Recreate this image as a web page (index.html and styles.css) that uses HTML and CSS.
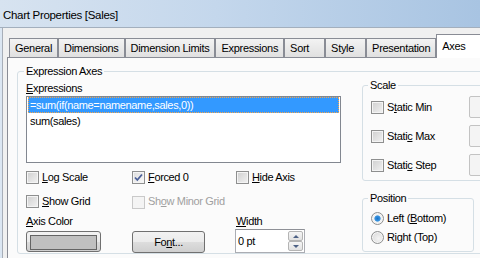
FILE: index.html
```html
<!DOCTYPE html>
<html lang="en">
<head>
    <meta charset="UTF-8">
    <title>Chart Properties [Sales]</title>
    <link rel="stylesheet" href="styles.css">
</head>
<body>
    <div class="window">
        <div class="titlebar">Chart Properties [Sales]</div>
        <div class="frame">
            <div class="tabs">
                <div class="tab">General</div>
                <div class="tab">Dimensions</div>
                <div class="tab">Dimension Limits</div>
                <div class="tab">Expressions</div>
                <div class="tab">Sort</div>
                <div class="tab">Style</div>
                <div class="tab">Presentation</div>
                <div class="tab active">Axes</div>
            </div>
            <div class="panel">
                <fieldset class="group axes-group">
                    <legend>Expression Axes</legend>
                    <div class="axes-layout">
                        <div class="left-col">
                            <div class="label"><u>E</u>xpressions</div>
                            <div class="listbox">
                                <div class="item selected">=sum(if(name=namename,sales,0))</div>
                                <div class="item">sum(sales)</div>
                            </div>
                            <div class="options">
                                <div class="check"><span class="box"></span><span><u>L</u>og Scale</span></div>
                                <div class="check checked"><span class="box"><svg width="11" height="11" viewBox="0 0 11 11"><path d="M2 5.5 L4.3 8 L9 2.5" fill="none" stroke="#4a5f98" stroke-width="1.8"/></svg></span><span><u>F</u>orced 0</span></div>
                                <div class="check"><span class="box"></span><span><u>H</u>ide Axis</span></div>
                                <div class="check"><span class="box"></span><span><u>S</u>how Grid</span></div>
                                <div class="check disabled"><span class="box"></span><span>Sh<u>o</u>w Minor Grid</span></div>
                            </div>
                            <div class="bottom-row">
                                <div class="label"><u>A</u>xis Color</div>
                                <div></div>
                                <div class="label"><u>W</u>idth</div>
                                <button class="btn color-btn"><span class="swatch"></span></button>
                                <button class="btn font-btn">Fo<u>n</u>t...</button>
                                <div class="spin">
                                    <span class="spin-value">0 pt</span>
                                    <span class="spin-buttons">
                                        <span class="spin-btn up"></span>
                                        <span class="spin-btn down"></span>
                                    </span>
                                </div>
                            </div>
                        </div>
                        <div class="right-col">
                            <fieldset class="group scale-group">
                                <legend>Scale</legend>
                                <div class="scale-row">
                                    <div class="check"><span class="box"></span><span>S<u>t</u>atic Min</span></div>
                                    <span class="edit"></span>
                                </div>
                                <div class="scale-row">
                                    <div class="check"><span class="box"></span><span>Stati<u>c</u> Max</span></div>
                                    <span class="edit"></span>
                                </div>
                                <div class="scale-row">
                                    <div class="check"><span class="box"></span><span>Stati<u>c</u> Step</span></div>
                                    <span class="edit"></span>
                                </div>
                            </fieldset>
                            <fieldset class="group position-group">
                                <legend>Position</legend>
                                <div class="radio selected"><span class="dot"></span><span>Left (<u>B</u>ottom)</span></div>
                                <div class="radio"><span class="dot"></span><span>Right (Top)</span></div>
                            </fieldset>
                        </div>
                    </div>
                </fieldset>
            </div>
        </div>
    </div>
</body>
</html>
```

FILE: styles.css
```css
body {
    margin: 0;
    font-family: "Liberation Sans", Arial, sans-serif;
    font-size: 11px;
    line-height: 13px;
    letter-spacing: -0.35px;
    color: #000;
    background: #f0f0f0;
}

.window {
    width: 480px;
    height: 258px;
    overflow: hidden;
    background: #dbe6f2;
}

.titlebar {
    height: 28px;
    box-sizing: border-box;
    padding: 9px 0 0 3px;
    font-size: 11.5px;
    letter-spacing: -0.3px;
    background: linear-gradient(to right, #d7e3f0 0%, #c4d7ec 45%, #a8c4e2 100%);
    border-bottom: 1px solid #a3afbd;
}

.frame {
    height: 230px;
    margin-left: 2px;
    padding-top: 6px;
    border-left: 1px solid #a7aeb8;
    background: #f0f0f0;
}

/* tab strip */
.tabs {
    display: flex;
    align-items: flex-end;
    margin-left: 6px;
}

.tab {
    flex-shrink: 0;
    min-width: 41px;
    height: 19px;
    box-sizing: border-box;
    padding: 3px 5px 0;
    border: 1px solid #898c95;
    border-bottom: none;
    background: linear-gradient(#f3f3f3, #e0e0e0);
    letter-spacing: -0.3px;
    white-space: nowrap;
}

.tab.active {
    min-width: 60px;
    height: 24px;
    padding: 5px 5px 0;
    margin-bottom: -1px;
    background: #fff;
    position: relative;
    z-index: 1;
}

.panel {
    height: 220px;
    margin-left: 4px;
    border-top: 1px solid #898c95;
    border-left: 1px solid #898c95;
    background: #fbfbfb;
}

/* group boxes */
.group {
    margin: 0;
    padding: 0;
    border: 1px solid #d5dfe5;
    border-radius: 3px;
    min-width: 0;
}

.group legend {
    padding: 0 2px;
    margin-left: -2px;
}

.axes-group {
    width: 600px;
    margin: 7px 0 0 9px;
    padding: 1px 0 0 8px;
}

.axes-layout {
    display: grid;
    grid-template-columns: 315px 140px;
    column-gap: 21px;
}

.left-col {
    padding-top: 3px;
}

.listbox {
    height: 67px;
    box-sizing: border-box;
    margin-top: 1px;
    padding: 0 1px;
    border: 1px solid #828790;
    background: #fff;
}

.item {
    height: 16px;
    line-height: 16px;
    padding-left: 2px;
    white-space: nowrap;
}

.item.selected {
    background: #3399ff;
    color: #fff;
    outline: 1px dotted #f7a64a;
    outline-offset: -1px;
}

/* check boxes */
.options {
    display: grid;
    grid-template-columns: 106px 104px auto;
    row-gap: 9px;
    margin-top: 7px;
}

.check,
.radio {
    display: flex;
    align-items: center;
    gap: 3px;
    height: 15px;
    white-space: nowrap;
}

.box {
    width: 13px;
    height: 13px;
    box-sizing: border-box;
    border: 1px solid #8e8f8f;
    background: linear-gradient(135deg, #cfcfcf 0%, #f2f2f2 100%);
    box-shadow: inset 0 0 0 1px #f4f4f4;
    display: flex;
    align-items: center;
    justify-content: center;
}

.check.checked .box {
    background: linear-gradient(135deg, #dcdcdc 0%, #fafafa 100%);
}

.check.disabled {
    color: #a0a0a0;
}

.check.disabled .box {
    border-color: #c9c9c9;
    background: #f4f4f4;
    box-shadow: none;
    margin-top: 2px;
}

/* bottom row */
.bottom-row {
    display: grid;
    grid-template-columns: 106px 104px auto;
    align-items: end;
    margin-top: 6px;
}

.btn {
    box-sizing: border-box;
    border: 1px solid #707070;
    border-radius: 3px;
    background: linear-gradient(#f2f2f2 0%, #ebebeb 50%, #dddddd 51%, #cfcfcf 100%);
    font: inherit;
    letter-spacing: inherit;
    padding: 0;
    margin-top: 3px;
}

.color-btn {
    width: 75px;
    height: 21px;
    padding: 3px;
    align-self: start;
}

.swatch {
    display: block;
    height: 13px;
    border: 1px solid #646464;
    background: #c0c0c0;
}

.font-btn {
    width: 73px;
    height: 22px;
    align-self: start;
}

.spin {
    width: 70px;
    height: 24px;
    box-sizing: border-box;
    margin-top: 1px;
    margin-left: -1px;
    border: 1px solid #abadb3;
    border-top-color: #8e9096;
    background: #fff;
    display: flex;
    align-items: center;
    justify-content: space-between;
    padding-left: 2px;
    align-self: start;
}

.spin-buttons {
    display: flex;
    flex-direction: column;
    align-self: stretch;
    width: 15px;
    padding: 1px;
}

.spin-btn {
    flex: 1;
    border: 1px solid #b4b4b4;
    border-radius: 2px;
    background: linear-gradient(#f6f6f6, #e2e2e2);
    position: relative;
}

.spin-btn::after {
    content: "";
    position: absolute;
    left: 4px;
    top: 3px;
    border-left: 3px solid transparent;
    border-right: 3px solid transparent;
}

.spin-btn.up::after {
    border-bottom: 3px solid #4d6185;
}

.spin-btn.down::after {
    border-top: 3px solid #4d6185;
}

/* right column */
.scale-group {
    padding: 4px 0 4px 8px;
}

.scale-group legend {
    margin-left: -3px;
}

.scale-row {
    display: flex;
    height: 22px;
}

.scale-row + .scale-row {
    margin-top: 7px;
}

.scale-row .check {
    flex: 0 0 98px;
    height: 13px;
    padding-top: 5px;
}

.edit {
    width: 40px;
    height: 22px;
    box-sizing: border-box;
    border: 1px solid #c3c3c3;
    border-radius: 2px;
    background: #f4f4f4;
}

.position-group {
    width: 112px;
    box-sizing: border-box;
    margin-top: 11px;
    padding: 6px 0 6px 8px;
    display: flex;
    flex-direction: column;
    gap: 4px;
}

.position-group legend {
    margin-left: -3px;
}

.dot {
    width: 13px;
    height: 13px;
    box-sizing: border-box;
    border-radius: 50%;
    border: 1px solid #8e8f8f;
    background: radial-gradient(circle at 60% 60%, #f4f4f4 0%, #d4d4d4 100%);
    box-shadow: inset 0 0 0 1px #f6f6f6;
}

.radio.selected .dot {
    background: radial-gradient(circle at 50% 50%, #1a73c9 0%, #3a95e0 35%, #f4f4f4 45%, #d8d8d8 100%);
}
```
